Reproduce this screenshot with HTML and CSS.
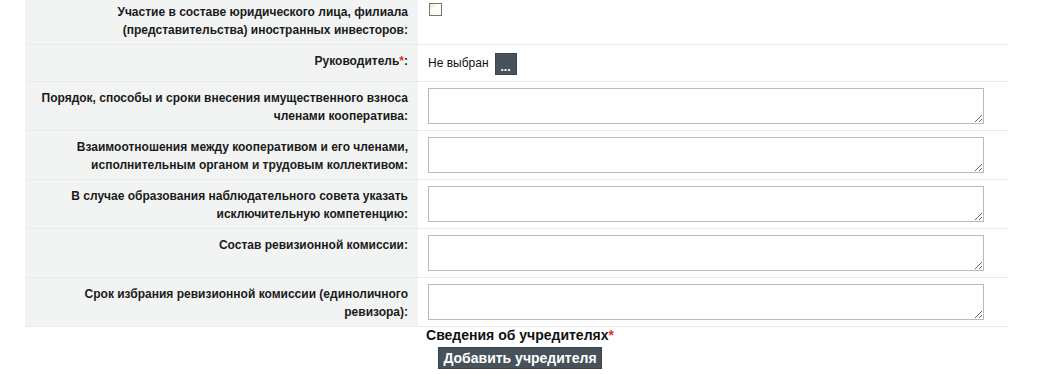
FILE: index.html
```html
<!DOCTYPE html>
<html lang="ru">
<head>
    <meta charset="UTF-8">
    <title>Сведения о кооперативе</title>
    <link rel="stylesheet" href="styles.css">
</head>
<body>
    <div class="page">
        <table class="form-table">
            <tr>
                <td class="label">Участие в составе юридического лица, филиала (представительства) иностранных инвесторов:</td>
                <td class="value"><input type="checkbox" class="check"></td>
            </tr>
            <tr>
                <td class="label">Руководитель<span class="req">*</span>:</td>
                <td class="value">
                    <div class="pick">
                        <span>Не выбран</span>
                        <button class="dots">...</button>
                    </div>
                </td>
            </tr>
            <tr>
                <td class="label">Порядок, способы и сроки внесения имущественного взноса членами кооператива:</td>
                <td class="value"><textarea class="area"></textarea></td>
            </tr>
            <tr>
                <td class="label">Взаимоотношения между кооперативом и его членами, исполнительным органом и трудовым коллективом:</td>
                <td class="value"><textarea class="area"></textarea></td>
            </tr>
            <tr>
                <td class="label">В случае образования наблюдательного совета указать исключительную компетенцию:</td>
                <td class="value"><textarea class="area"></textarea></td>
            </tr>
            <tr>
                <td class="label">Состав ревизионной комиссии:</td>
                <td class="value"><textarea class="area"></textarea></td>
            </tr>
            <tr>
                <td class="label">Срок избрания ревизионной комиссии (единоличного ревизора):</td>
                <td class="value"><textarea class="area"></textarea></td>
            </tr>
        </table>

        <div class="founders">
            <div class="founders-title">Сведения об учредителях<span class="req">*</span></div>
            <button class="btn">Добавить учредителя</button>
        </div>
    </div>
</body>
</html>
```

FILE: styles.css
```css
body {
    margin: 0;
    font-family: "Liberation Sans", Arial, sans-serif;
    font-size: 12px;
    color: #1a1a1a;
    background: #fff;
}
.page {
    margin-left: 25px;
    width: 983px;
    margin-top: -4px;
}
.form-table {
    width: 100%;
    border-collapse: collapse;
    border-bottom: 1px solid #e8ebea;
}
.form-table tr + tr {
    border-top: 1px solid #e8ebea;
}
.label {
    width: 373px;
    background: #f2f4f3;
    text-align: right;
    font-weight: bold;
    line-height: 18px;
    padding: 7px 10px 5px 10px;
    vertical-align: top;
}
.value {
    padding: 6px 24px 6px 10px;
    vertical-align: top;
}
.req {
    color: #e0302a;
}
.check {
    appearance: none;
    display: block;
    width: 13px;
    height: 13px;
    margin: 1px 0 0 1px;
    border: 1px solid #77776d;
    background: linear-gradient(135deg, #e8e6d8, #fdfcf3 40%);
    box-sizing: border-box;
}
.pick {
    display: flex;
    align-items: center;
    height: 24px;
    gap: 6px;
    font-size: 12px;
    color: #111;
}
.dots {
    width: 22px;
    height: 22px;
    margin-top: 2px;
    padding: 6px 0 0 0;
    background: #47525a;
    border: 1px solid #3a444b;
    color: #fff;
    font-family: "Liberation Sans", Arial, sans-serif;
    font-size: 12px;
    font-weight: bold;
    line-height: 12px;
    cursor: pointer;
}
.area {
    display: block;
    width: 556px;
    height: 36px;
    box-sizing: border-box;
    border: 1px solid #bcbcae;
    margin: 0;
    padding: 2px;
}
.founders {
    display: flex;
    flex-direction: column;
    align-items: center;
    padding-left: 7px;
}
.founders-title {
    font-size: 14px;
    font-weight: bold;
    color: #111;
    line-height: 17px;
}
.btn {
    margin-top: 3px;
    height: 22px;
    padding: 0 4px;
    background: #47525a;
    border: 1px solid #3a444b;
    color: #fff;
    font-family: "Liberation Sans", Arial, sans-serif;
    font-size: 14px;
    font-weight: bold;
    cursor: pointer;
}
```
